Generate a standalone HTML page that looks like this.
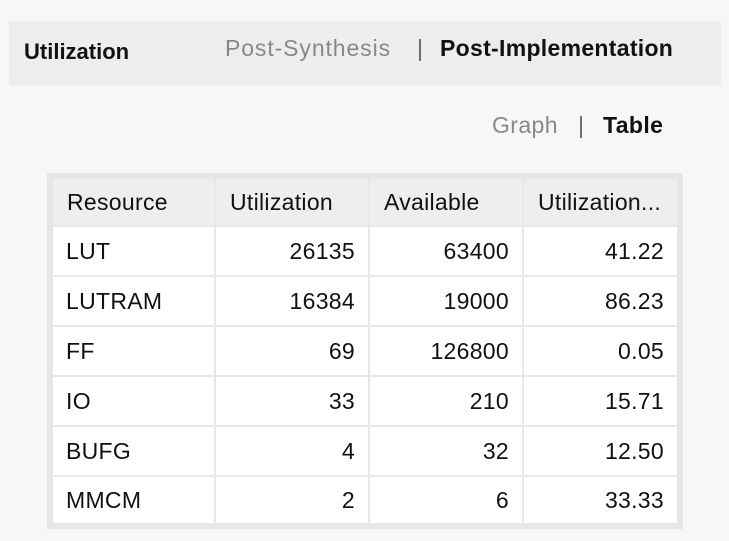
<!DOCTYPE html>
<html><head><style>
body{margin:0;width:729px;height:541px;background:#f7f7f7;font-family:"Liberation Sans",Arial,sans-serif;position:relative;overflow:hidden}
.hdr{position:absolute;left:9px;top:21px;width:712px;height:64px;background:#ededed}
.t{position:absolute;white-space:nowrap;letter-spacing:0.4px}
table{position:absolute;left:47px;top:173px;border-collapse:collapse;background:#fff;border:6px solid #e6e6e6;width:636px;table-layout:fixed}
td,th{height:50px;border:2px solid #e8e8e8;font-size:23px;letter-spacing:0.3px;color:#111;font-weight:normal;padding:0 13px;box-sizing:border-box;white-space:nowrap;overflow:hidden}
th{background:#eeeeee;text-align:left;height:50px;padding-left:14px}
td{text-align:right}
td:first-child{text-align:left}
</style></head><body>
<div class="hdr"></div>
<div class="t" style="left:24px;top:39px;font-size:22px;font-weight:bold;color:#111;letter-spacing:0">Utilization</div>
<div class="t" style="left:225px;top:35px;font-size:23px;color:#888;letter-spacing:0.9px">Post-Synthesis</div>
<div class="t" style="left:417px;top:35px;font-size:23px;color:#666">|</div>
<div class="t" style="left:440px;top:35px;font-size:23px;font-weight:bold;color:#111;letter-spacing:0.3px">Post-Implementation</div>
<div class="t" style="left:492px;top:112px;font-size:23px;color:#888">Graph</div>
<div class="t" style="left:578px;top:112px;font-size:23px;color:#666">|</div>
<div class="t" style="left:603px;top:112px;font-size:23px;font-weight:bold;color:#111">Table</div>
<table>
<colgroup><col style="width:165px"><col style="width:154px"><col style="width:154px"><col></colgroup>
<tr><th>Resource</th><th>Utilization</th><th>Available</th><th>Utilization...</th></tr>
<tr><td>LUT</td><td>26135</td><td>63400</td><td>41.22</td></tr>
<tr><td>LUTRAM</td><td>16384</td><td>19000</td><td>86.23</td></tr>
<tr><td>FF</td><td>69</td><td>126800</td><td>0.05</td></tr>
<tr><td>IO</td><td>33</td><td>210</td><td>15.71</td></tr>
<tr><td>BUFG</td><td>4</td><td>32</td><td>12.50</td></tr>
<tr><td>MMCM</td><td>2</td><td>6</td><td>33.33</td></tr>
</table>
</body></html>
